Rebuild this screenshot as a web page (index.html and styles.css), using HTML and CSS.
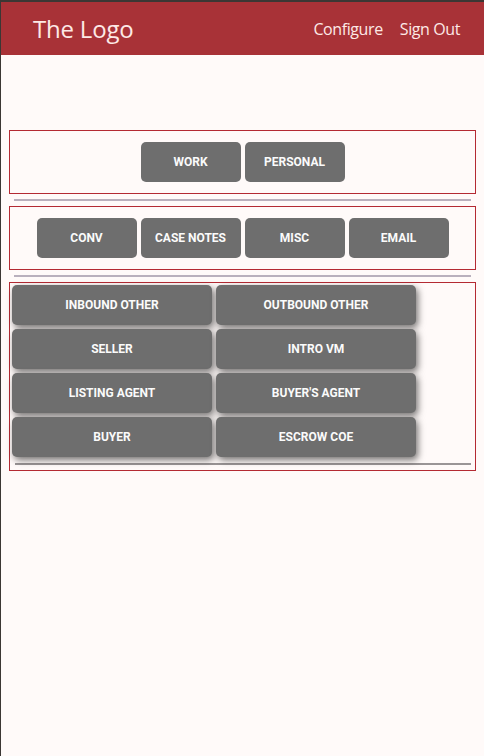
FILE: index.html
```html
<!DOCTYPE html>
<html>
<head>
    <title>The Logo</title>
    <meta charset="UTF-8">
    <link rel="stylesheet" href="styles.css">
</head>
<body>
<header>
    <div class="logo">The Logo</div>
    <nav>
        <a href="#">Configure</a>
        <a href="#">Sign Out</a>
    </nav>
</header>

<main>
    <div class="panel">
        <button class="btn">Work</button>
        <button class="btn">Personal</button>
    </div>
    <hr>
    <div class="panel">
        <button class="btn">Conv</button>
        <button class="btn">Case Notes</button>
        <button class="btn">Misc</button>
        <button class="btn">Email</button>
    </div>
    <hr>
    <div class="panel tall">
        <div class="grid">
            <button class="btn big">Inbound Other</button>
            <button class="btn big">Outbound Other</button>
            <button class="btn big">Seller</button>
            <button class="btn big">Intro VM</button>
            <button class="btn big">Listing Agent</button>
            <button class="btn big">Buyer's Agent</button>
            <button class="btn big">Buyer</button>
            <button class="btn big">Escrow COE</button>
        </div>
        <hr class="inner">
    </div>
</main>
</body>
</html>
```

FILE: styles.css
```css
html {
    background: #fffaf9;
}

body {
    margin: 0;
    min-height: 100vh;
    box-sizing: border-box;
    border-left: 1px solid #3b3734;
    border-top: 2px solid #3b3734;
    background: #fffaf9;
    font-family: "Open Sans", sans-serif;
}

header {
    height: 53px;
    background: #a83237;
    display: flex;
    align-items: center;
    justify-content: space-between;
    padding: 0 24px 0 32px;
}

.logo {
    color: #fde9e6;
    font-size: 24px;
    letter-spacing: -0.2px;
}

nav {
    display: flex;
    gap: 17px;
}

nav a {
    color: #fde9e6;
    text-decoration: none;
    font-size: 16px;
    letter-spacing: -0.4px;
}

main {
    margin: 0 8px;
    padding-top: 75px;
}

.panel {
    border: 1px solid #b42a33;
    padding: 11px 0;
    display: flex;
    justify-content: center;
    gap: 4px;
}

.panel.tall {
    display: block;
    padding: 1px 0 0;
}

.grid {
    display: grid;
    grid-template-columns: 200px 200px;
    gap: 4px;
    padding: 1px 0 0 2px;
}

hr {
    border: 0;
    border-top: 2px solid #b9b0bd;
    margin: 5px 5px 5px;
}

hr.inner {
    border-top-color: #9a9596;
    margin: 6px 4px 5px 5px;
}

.btn {
    width: 100px;
    height: 40px;
    border: 0;
    border-radius: 5px;
    background: #6e6e6e;
    color: #fbfbfb;
    font-family: Roboto, sans-serif;
    font-weight: bold;
    font-size: 12px;
    text-transform: uppercase;
    padding: 0;
}

.btn.big {
    width: 200px;
    box-shadow: 2px 3px 7px rgba(0, 0, 0, 0.55);
}
```
